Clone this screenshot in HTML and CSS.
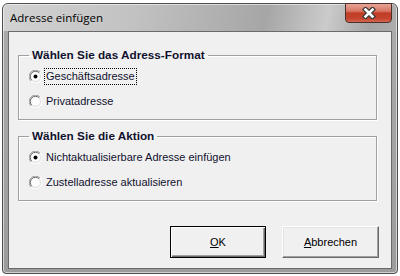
FILE: index.html
```html
<!DOCTYPE html>
<html lang="de">
<head>
    <meta charset="UTF-8">
    <title>Adresse einfügen</title>
    <link rel="stylesheet" href="styles.css">
</head>
<body>
    <div class="window">
        <div class="titlebar">
            <span class="title">Adresse einfügen</span>
            <button class="close" type="button" aria-label="Schließen">
                <svg width="14" height="12" viewBox="0 0 14 12">
                    <path d="M3.5 2.5 L10.5 9.5 M10.5 2.5 L3.5 9.5" stroke="#3a3a3a" stroke-width="5" stroke-linecap="square"/>
                    <path d="M3.5 2.5 L10.5 9.5 M10.5 2.5 L3.5 9.5" stroke="#fff" stroke-width="2.6" stroke-linecap="square"/>
                </svg>
            </button>
        </div>

        <div class="client">
            <fieldset class="group">
                <legend>Wählen Sie das Adress-Format</legend>
                <div class="option">
                    <svg class="radio" width="13" height="13" viewBox="0 0 13 13">
                        <path d="M2 11 A6 6 0 0 1 11 2" fill="none" stroke="#a0a0a0"/>
                        <path d="M11 2 A6 6 0 0 1 2 11" fill="none" stroke="#fff"/>
                        <path d="M2.8 10.2 A5 5 0 0 1 10.2 2.8" fill="none" stroke="#696969"/>
                        <path d="M10.2 2.8 A5 5 0 0 1 2.8 10.2" fill="none" stroke="#e3e3e3"/>
                        <circle cx="6.5" cy="6.5" r="4" fill="#fff"/>
                        <circle cx="6.5" cy="6.5" r="2" fill="#000"/>
                    </svg>
                    <span class="label focus">Geschäftsadresse</span>
                </div>
                <div class="option">
                    <svg class="radio" width="13" height="13" viewBox="0 0 13 13">
                        <path d="M2 11 A6 6 0 0 1 11 2" fill="none" stroke="#a0a0a0"/>
                        <path d="M11 2 A6 6 0 0 1 2 11" fill="none" stroke="#fff"/>
                        <path d="M2.8 10.2 A5 5 0 0 1 10.2 2.8" fill="none" stroke="#696969"/>
                        <path d="M10.2 2.8 A5 5 0 0 1 2.8 10.2" fill="none" stroke="#e3e3e3"/>
                        <circle cx="6.5" cy="6.5" r="4" fill="#fff"/>
                    </svg>
                    <span class="label">Privatadresse</span>
                </div>
            </fieldset>

            <fieldset class="group">
                <legend>Wählen Sie die Aktion</legend>
                <div class="option">
                    <svg class="radio" width="13" height="13" viewBox="0 0 13 13">
                        <path d="M2 11 A6 6 0 0 1 11 2" fill="none" stroke="#a0a0a0"/>
                        <path d="M11 2 A6 6 0 0 1 2 11" fill="none" stroke="#fff"/>
                        <path d="M2.8 10.2 A5 5 0 0 1 10.2 2.8" fill="none" stroke="#696969"/>
                        <path d="M10.2 2.8 A5 5 0 0 1 2.8 10.2" fill="none" stroke="#e3e3e3"/>
                        <circle cx="6.5" cy="6.5" r="4" fill="#fff"/>
                        <circle cx="6.5" cy="6.5" r="2" fill="#000"/>
                    </svg>
                    <span class="label">Nichtaktualisierbare Adresse einfügen</span>
                </div>
                <div class="option">
                    <svg class="radio" width="13" height="13" viewBox="0 0 13 13">
                        <path d="M2 11 A6 6 0 0 1 11 2" fill="none" stroke="#a0a0a0"/>
                        <path d="M11 2 A6 6 0 0 1 2 11" fill="none" stroke="#fff"/>
                        <path d="M2.8 10.2 A5 5 0 0 1 10.2 2.8" fill="none" stroke="#696969"/>
                        <path d="M10.2 2.8 A5 5 0 0 1 2.8 10.2" fill="none" stroke="#e3e3e3"/>
                        <circle cx="6.5" cy="6.5" r="4" fill="#fff"/>
                    </svg>
                    <span class="label">Zustelladresse aktualisieren</span>
                </div>
            </fieldset>

            <div class="buttons">
                <button class="btn default" type="button"><u>O</u>K</button>
                <button class="btn" type="button"><u>A</u>bbrechen</button>
            </div>
        </div>
    </div>
</body>
</html>
```

FILE: styles.css
```css
body {
    margin: 0;
    background: #fff;
    font-family: "Liberation Sans", Arial, sans-serif;
}
.window {
    box-sizing: border-box;
    width: 396px;
    height: 271px;
    margin: 3px 0 0 2px;
    padding: 0 5px 4px 5px;
    border: 1px solid #4f4f4f;
    border-radius: 6px 6px 4px 4px;
    background:
        linear-gradient(to bottom, transparent 27px, #a9a9a9 27px, #9c9c9c 100%),
        linear-gradient(100deg, #d2d2d2 0%, #c2c2c2 30%, #a6a6a6 60%, #cbcbcb 74%, #a4a4a4 84%, #bdbdbd 100%);
    box-shadow: inset 0 0 0 1px rgba(255, 255, 255, 0.55);
    display: flex;
    flex-direction: column;
}
.titlebar {
    height: 27px;
    display: flex;
    align-items: center;
    justify-content: space-between;
}
.title {
    padding-left: 2px;
    font-family: "Open Sans", sans-serif;
    font-size: 11.5px;
    color: #000;
}
.close {
    align-self: flex-start;
    width: 47px;
    height: 20px;
    margin: -1px 0 0 0;
    padding: 0;
    border: 1px solid #4a2f2a;
    border-radius: 0 0 4px 4px;
    background: linear-gradient(to bottom, #e8a497 0%, #d77663 40%, #c13d27 50%, #c5432c 80%, #d4674f 100%);
    display: flex;
    align-items: center;
    justify-content: center;
}
.client {
    flex: 1;
    border: 1px solid #6a6a6a;
    background: #f0f0f0;
    padding: 16px 12px 0 9px;
    display: flex;
    flex-direction: column;
    gap: 9px;
}
.group {
    margin: 0;
    width: 359px;
    box-sizing: border-box;
    padding: 6px 0 9px 10px;
    border: 1px solid #a0a0a0;
    box-shadow: 1px 1px 0 #fff, inset 1px 1px 0 #fff;
    display: flex;
    flex-direction: column;
    gap: 8px;
}
.group legend {
    padding: 0 3px;
    font-size: 11.75px;
    font-weight: bold;
    line-height: 14px;
    color: #10102e;
}
.option {
    display: flex;
    align-items: center;
    height: 17px;
}
.radio {
    margin-right: 2px;
}
.label {
    padding: 0 1px;
    border: 1px dotted transparent;
    font-size: 11px;
    line-height: 15px;
    color: #10102e;
}
.label.focus {
    border-color: #000;
}
.buttons {
    margin-top: 16px;
    display: flex;
    justify-content: flex-end;
    gap: 16px;
}
.btn {
    height: 32px;
    width: 96px;
    font-family: "Liberation Sans", Arial, sans-serif;
    font-size: 11px;
    color: #000;
    background: #f0f0f0;
    border: 1px solid;
    border-color: #fff #696969 #696969 #fff;
    box-shadow: inset -1px -1px 0 #a0a0a0, inset 1px 1px 0 #e3e3e3;
}
.btn + .btn {
    width: 97px;
}
.btn.default {
    border-color: #000;
    box-shadow: inset 1px 1px 0 #fff, inset -1px -1px 0 #696969, inset -2px -2px 0 #a0a0a0;
}
```
